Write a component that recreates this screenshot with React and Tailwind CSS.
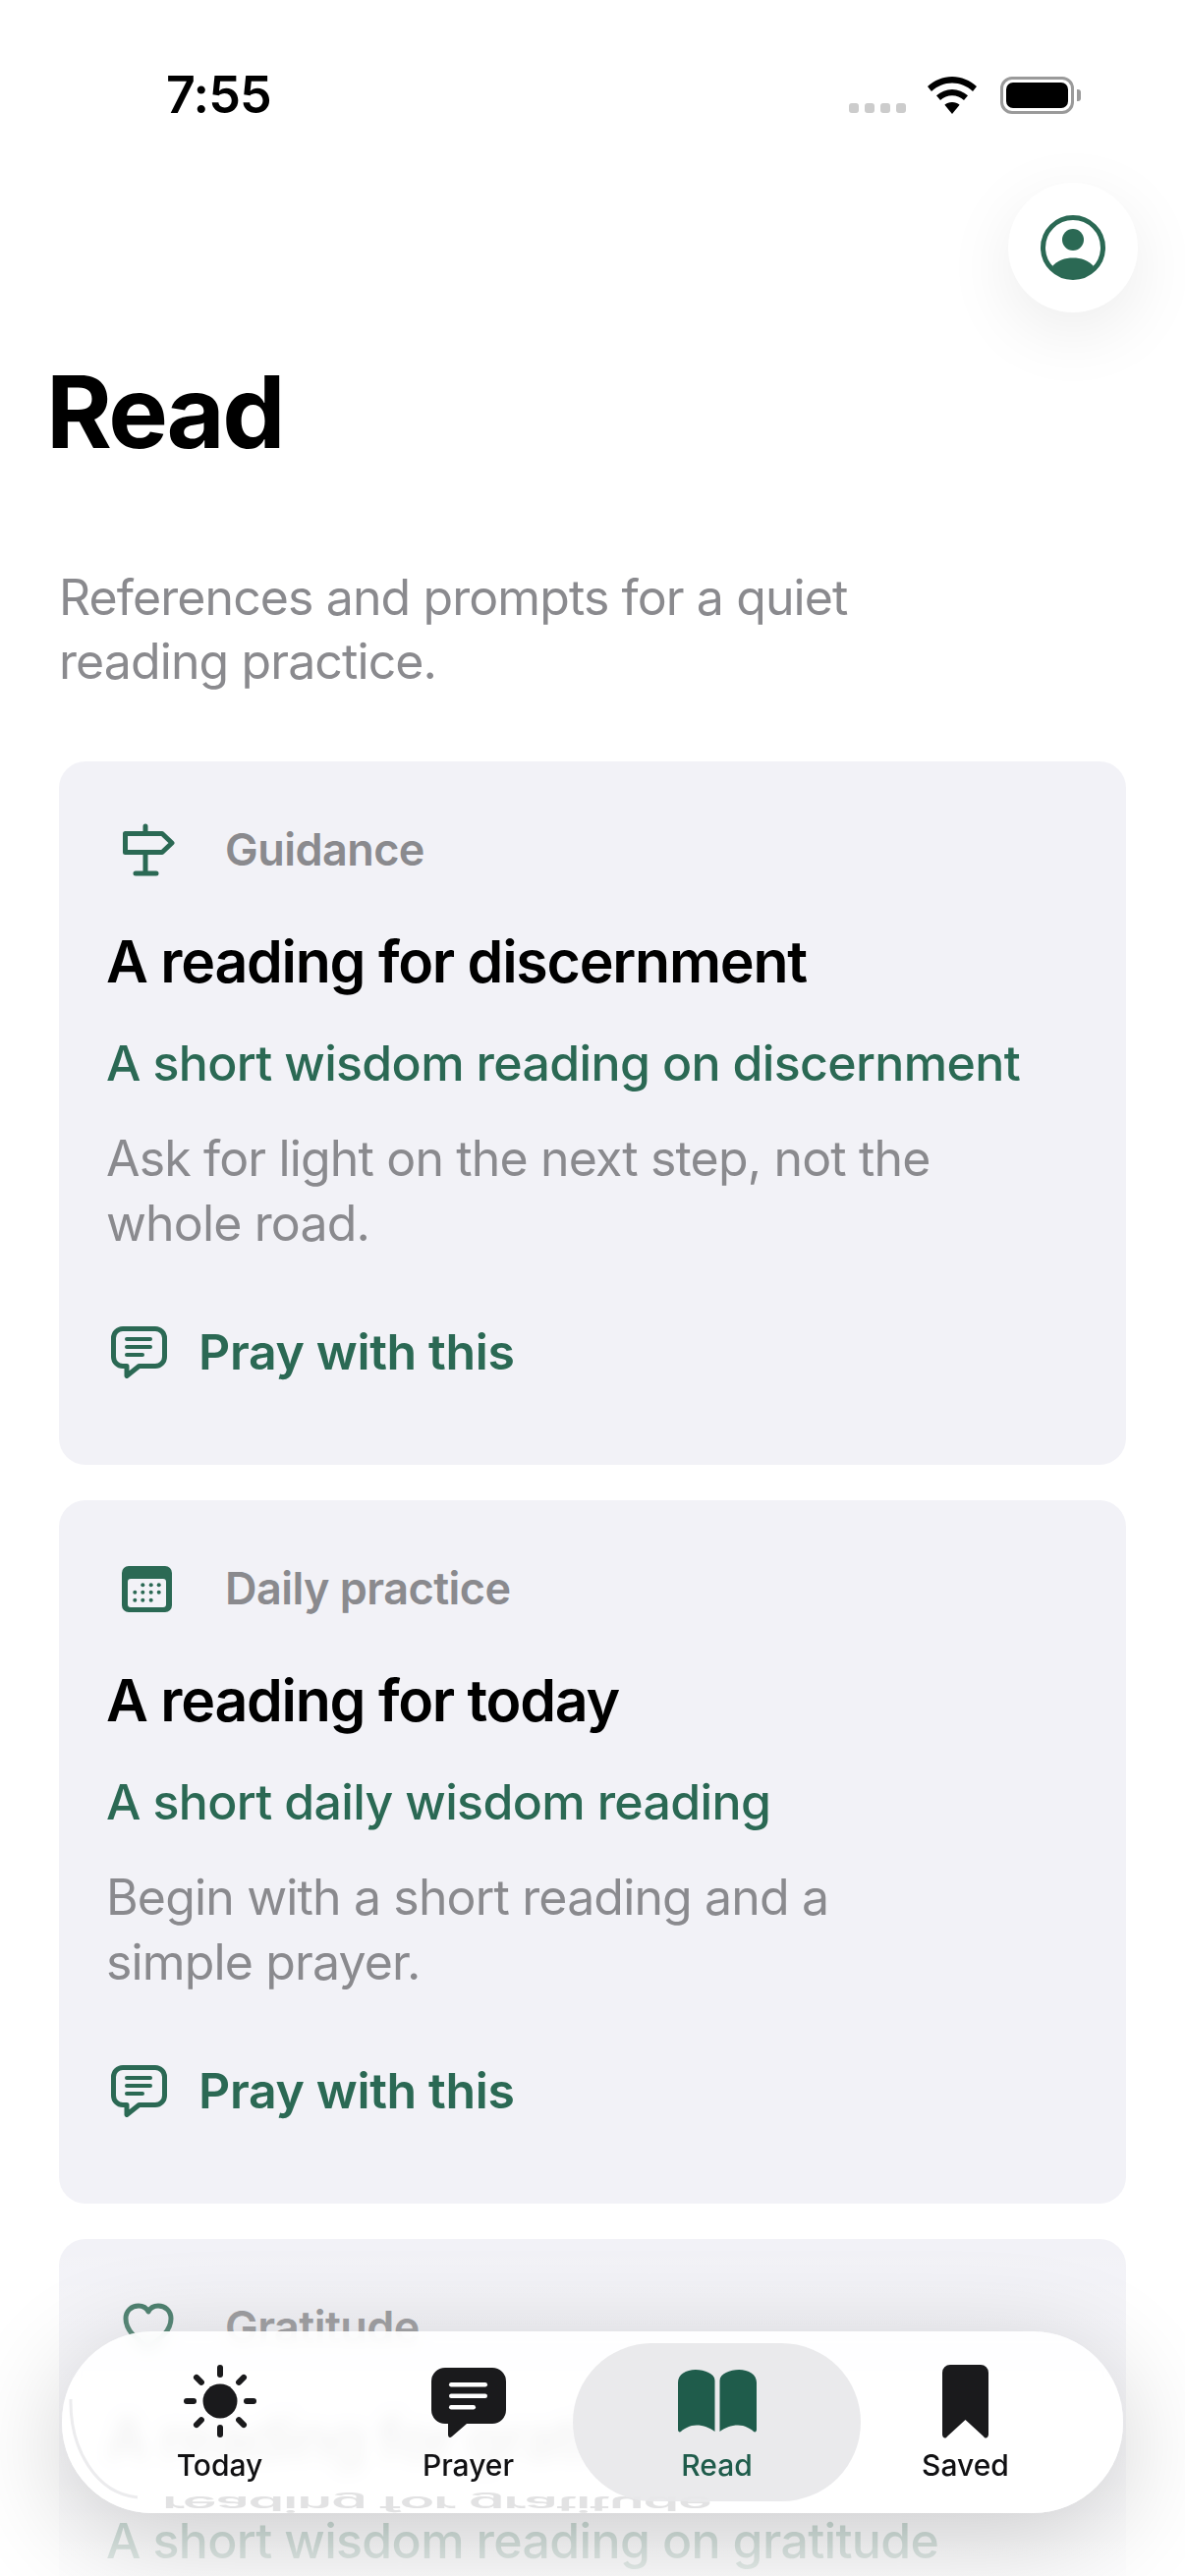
import React from "react";

function SignIcon() {
    return <svg width="54" height="54" viewBox="0 0 54 54" fill="none" stroke="#2b6954" strokeWidth="5" strokeLinecap="round" strokeLinejoin="round">
        <path d="M24 3v7M24 30v21M14 51h21"/>
        <path d="M3.500 10.500H41L51 20 41 29.500H3.500z"/>
    </svg>
}

function CalendarIcon() {
    const cols = [13.300, 21.300, 29.700, 37.700];
    const rows = [[1, 2, 3], [0, 1, 2, 3], [0, 1, 2]];
    const ys = [19.300, 26.700, 34.700];
    return <svg width="51" height="47" viewBox="0 0 51 47">
        <rect x="0" y="0" width="51" height="47" rx="7" fill="#2b6954"/>
        <rect x="6" y="13" width="39" height="29" rx="3" fill="#f2f2f7"/>
        {rows.map((row, r) => row.map(c => <circle key={r + '-' + c} cx={cols[c]} cy={ys[r]} r="2" fill="#2b6954"/>))}
    </svg>
}

function HeartIcon() {
    return <svg width="54" height="50" viewBox="0 0 54 50" fill="none" stroke="#2b6954" strokeWidth="5" strokeLinejoin="round">
        <path d="M27 46C14 36 4 28 4 16 4 8 10 3 17 3c4 0 8 2 10 6 2-4 6-6 10-6 7 0 13 5 13 13 0 12-10 20-23 30z"/>
    </svg>
}

function ChatIcon() {
    return <svg width="57" height="53" viewBox="0 0 57 53" fill="none" stroke="#2b6954" strokeWidth="5" strokeLinecap="round" strokeLinejoin="round">
        <path d="M12 2.500h33a9.500 9.500 0 0 1 9.500 9.500v19a9.500 9.500 0 0 1-9.500 9.500H28.500L16 50.500v-10h-4A9.500 9.500 0 0 1 2.500 31V12A9.500 9.500 0 0 1 12 2.500z"/>
        <path d="M16 13h24M16 21h24" strokeWidth="4"/>
        <path d="M16 29h16" strokeWidth="4"/>
    </svg>
}

function Card({ icon, label, title, subtitle, body }) {
    return <div className="bg-[#f2f2f7] rounded-[27px] h-[716px] pl-[48px] pr-[40px] pt-[63px]">
        <div className="flex items-center h-[54px]">
            <div className="w-[121px] pl-[16px] flex items-center">{icon}</div>
            <span className="text-[45px] font-semibold text-[#8a8a8e] tracking-[-0.55px] leading-[54px]">{label}</span>
        </div>
        <h2 className="mt-[51px] text-[59px] leading-[72px] font-semibold text-black tracking-[-1.25px]">{title}</h2>
        <p className="mt-[34px] text-[50px] leading-[66px] font-medium text-[#2b6954] tracking-[-0.65px]">{subtitle}</p>
        <p className="mt-[31px] text-[50px] leading-[66px] text-[#8a8a8e] tracking-[-0.85px] w-[860px]">{body}</p>
        <div className="mt-[68px] flex items-center h-[60px] text-[#2b6954]">
            <div className="w-[94px] pl-[5px] flex items-center"><ChatIcon/></div>
            <span className="text-[50px] font-semibold tracking-[-0.35px]">Pray with this</span>
        </div>
    </div>
}

function SunIcon() {
    const rays = [0, 45, 90, 135, 180, 225, 270, 315];
    return <svg width="76" height="76" viewBox="0 0 76 76">
        <circle cx="38" cy="38" r="17.500" fill="#1a1a1c"/>
        {rays.map(r => <rect key={r} x="35" y="1" width="6" height="13" rx="3" fill="#1a1a1c" transform={`rotate(${r} 38 38)`}/>)}
    </svg>
}

function BubbleIcon() {
    return <svg width="76" height="72" viewBox="0 0 76 72">
        <path d="M14 0h48a14 14 0 0 1 14 14v29a14 14 0 0 1-14 14H36L21 70c-2 2-4 1-4-2V57h-3A14 14 0 0 1 0 43V14A14 14 0 0 1 14 0z" fill="#1a1a1c"/>
        <rect x="18" y="15" width="39" height="4.500" rx="2.200" fill="#fff"/>
        <rect x="18" y="26.500" width="39" height="4.500" rx="2.200" fill="#fff"/>
        <rect x="18" y="38" width="27" height="4.500" rx="2.200" fill="#fff"/>
    </svg>
}

function BookIcon() {
    return <svg width="80" height="64" viewBox="0 0 80 64" fill="#1f5c4b" className="mb-[6px]">
        <path d="M0 13C0 5 8 0 18 0 27 0 37.500 4 37.500 11v52C32 59 26 56.500 19 56.500 12 56.500 6 60 3 63c-1.500 1-3 0-3-2z"/>
        <path d="M80 13C80 5 72 0 62 0 53 0 42.500 4 42.500 11v52C48 59 54 56.500 61 56.500 68 56.500 74 60 77 63c1.500 1 3 0 3-2z"/>
    </svg>
}

function BookmarkIcon() {
    return <svg width="47" height="75" viewBox="0 0 47 75">
        <path d="M8 0h31a8 8 0 0 1 8 8v63c0 3-3 5-5 2L23.500 56 5 73c-2 3-5 1-5-2V8a8 8 0 0 1 8-8z" fill="#1a1a1c"/>
    </svg>
}

function NavItem({ icon, label, active }) {
    return <div className={ 'relative flex flex-col items-center ' + (active ? ' -mx-[20px] bg-[#e8e8ea]/90 rounded-[81px]' : '')}>
        <div className="h-[98px] flex items-end justify-center pb-[1px]">{icon}</div>
        <span className={ 'mt-[8px] text-[30px] leading-[36px] font-medium ' + (active ? 'text-[#1f5c4b]' : 'text-[#111113]')}>{label}</span>
    </div>
}

function StatusBar() {
    return <div className="h-[184px] flex items-start justify-between pl-[169px] pr-[113px] pt-[68px]">
        <span className="text-[52px] leading-[58px] font-semibold text-black tracking-[-0.8px]">7:55</span>
        <div className="flex items-start pt-[10px]">
            <div className="flex gap-[6px] mt-[27px] mr-[22px]">
                <i className="w-[10px] h-[10px] rounded-[3px] bg-[#cccccc]"/>
                <i className="w-[10px] h-[10px] rounded-[3px] bg-[#cccccc]"/>
                <i className="w-[10px] h-[10px] rounded-[3px] bg-[#cccccc]"/>
                <i className="w-[10px] h-[10px] rounded-[3px] bg-[#cccccc]"/>
            </div>
            <svg width="50" height="38" viewBox="0 0 50 38" className="mr-[24px]">
                <path d="M25 0c9.500 0 18 3.700 25 10l-4 5C40 9.500 33 6.500 25 6.500S10 9.500 4 15l-4-5C7 3.700 15.500 0 25 0z"/>
                <path d="M25 13c6 0 11.500 2.300 16 6.300l-4 4.700c-3.300-3-7.500-4.700-12-4.700S16.300 21 13 24l-4-4.700C13.500 15.300 19 13 25 13z"/>
                <path d="M25 26c3 0 5.500 1 7.600 2.800L25 38l-7.600-9.200C19.500 27 22 26 25 26z"/>
            </svg>
            <div className="relative w-[75px] h-[38px] rounded-[12px] border-[3px] border-[#9a9a9a] p-[3px]">
                <div className="w-full h-full rounded-[7px] bg-black"/>
                <div className="absolute -right-[10px] top-[10px] w-[4px] h-[12px] rounded-r-[3px] bg-[#9a9a9a]"/>
            </div>
        </div>
    </div>
}

export default function App() {
    return <div className="relative w-[1206px] h-[2622px] overflow-hidden bg-white font-['Inter',sans-serif]">
        <StatusBar/>

        <div className="flex justify-end pr-[48px] pt-[2px]">
            <div className="w-[132px] h-[132px] rounded-full bg-white flex items-center justify-center shadow-[0_20px_70px_rgba(0,0,0,0.08)]">
                <svg width="66" height="66" viewBox="0 0 66 66">
                    <circle cx="33" cy="33" r="30.500" fill="#fff" stroke="#2b6954" strokeWidth="5"/>
                    <circle cx="33" cy="25" r="11" fill="#2b6954"/>
                    <path d="M12 52c5-6 13-8.500 21-8.500S49 46 54 52c-5 8-13 13-21 13S17 60 12 52z" fill="#2b6954"/>
                </svg>
            </div>
        </div>

        <div className="px-[60px]">
            <h1 className="-ml-[13px] mt-[41px] text-[102px] leading-[120px] font-bold text-black tracking-[-2.5px]">Read</h1>
            <p className="mt-[97px] text-[50px] leading-[65px] text-[#8a8a8e] tracking-[-0.9px] w-[900px]">References and prompts for a quiet reading practice.</p>

            <div className="mt-[69px] flex flex-col gap-[36px]">
                <Card icon={<SignIcon/>} label="Guidance" title="A reading for discernment"
                      subtitle="A short wisdom reading on discernment"
                      body="Ask for light on the next step, not the whole road."/>
                <Card icon={<CalendarIcon/>} label="Daily practice" title="A reading for today"
                      subtitle="A short daily wisdom reading"
                      body="Begin with a short reading and a simple prayer."/>
                <Card icon={<HeartIcon/>} label="Gratitude" title="A reading for gratitude"
                      subtitle="A short wisdom reading on gratitude"
                      body="Give thanks for what is already here."/>
            </div>
        </div>

        {/* fade over the content behind the tab bar */}
        <div className="absolute inset-x-0 bottom-0 h-[340px] bg-gradient-to-b from-white/0 to-white/90"/>

        <nav className="absolute left-[63px] top-[2373px] w-[1080px] h-[185px] rounded-[92px] bg-white/90 backdrop-blur-[8px] shadow-[0_24px_110px_rgba(0,0,0,0.2)] overflow-hidden">
            {/* glass refraction of the card behind */}
            <div className="absolute left-[102px] top-[155px] text-[59px] leading-[40px] font-semibold tracking-[-1.3px] text-[#8a8a8e]/25 scale-y-[-0.35] whitespace-nowrap">reading for gratitude</div>
            <svg width="90" height="185" viewBox="0 0 90 185" fill="none" stroke="#ececee" strokeWidth="3" className="absolute left-0 top-0">
                <path d="M9 69C8 120 35 165 77 169"/>
            </svg>
            <div className="relative grid grid-cols-4 px-[34px] py-[12px] h-full">
                <NavItem icon={<SunIcon/>} label="Today"/>
                <NavItem icon={<BubbleIcon/>} label="Prayer"/>
                <NavItem icon={<BookIcon/>} label="Read" active/>
                <NavItem icon={<BookmarkIcon/>} label="Saved"/>
            </div>
        </nav>
    </div>
}
